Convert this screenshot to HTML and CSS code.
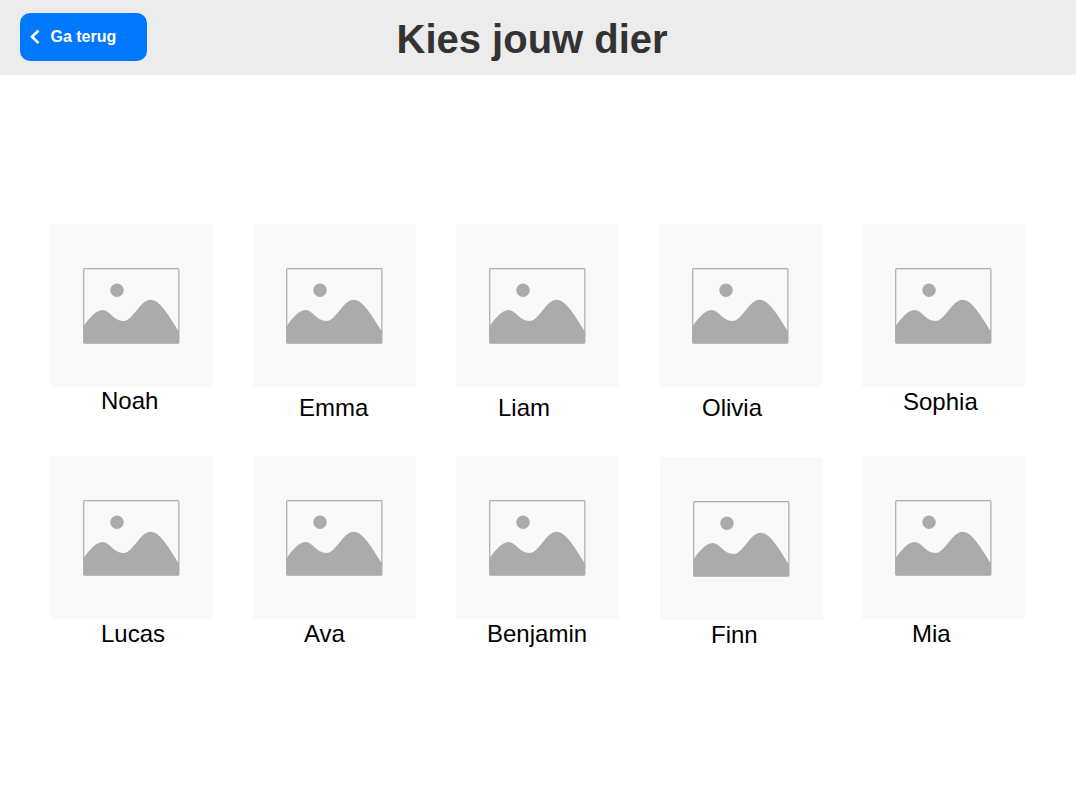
FILE: index.html
```html
<!DOCTYPE html>
<html lang="nl">
<head>
<meta charset="utf-8">
<title>Kies jouw dier</title>
<link rel="stylesheet" href="styles.css">
</head>
<body>
<svg class="defs" aria-hidden="true">
  <symbol id="picture" viewBox="0 0 163 163">
    <rect x="33.700" y="44.700" width="95.200" height="74.400" rx="1" fill="none" stroke="#ababab" stroke-width="1.200"/>
    <circle cx="67" cy="66.200" r="6.700" fill="#ababab"/>
    <path fill="#ababab" d="M33.700 102C39 94.500 46 86 52.500 86C60 86 63 97 73.500 97C83 97 90 75.700 100.500 75.700C110 75.700 119 92 128.800 107.200V119.300H33.700Z"/>
  </symbol>
</svg>
<header class="header">
  <button class="back" type="button">
    <svg class="back-icon" viewBox="0 0 10 16" aria-hidden="true"><path d="M8.500 1.500L2 7.800L8.500 14.100" fill="none" stroke="#fff" stroke-width="2.600"/></svg>
    <span>Ga terug</span>
  </button>
  <h1 class="title">Kies jouw dier</h1>
</header>
<main class="animals">
  <div class="card noah"><svg class="tile"><use href="#picture"/></svg><span class="name">Noah</span></div>
  <div class="card emma"><svg class="tile"><use href="#picture"/></svg><span class="name">Emma</span></div>
  <div class="card liam"><svg class="tile"><use href="#picture"/></svg><span class="name">Liam</span></div>
  <div class="card olivia"><svg class="tile"><use href="#picture"/></svg><span class="name">Olivia</span></div>
  <div class="card sophia"><svg class="tile"><use href="#picture"/></svg><span class="name">Sophia</span></div>
  <div class="card lucas"><svg class="tile"><use href="#picture"/></svg><span class="name">Lucas</span></div>
  <div class="card ava"><svg class="tile"><use href="#picture"/></svg><span class="name">Ava</span></div>
  <div class="card benjamin"><svg class="tile"><use href="#picture"/></svg><span class="name">Benjamin</span></div>
  <div class="card finn"><svg class="tile"><use href="#picture"/></svg><span class="name">Finn</span></div>
  <div class="card mia"><svg class="tile"><use href="#picture"/></svg><span class="name">Mia</span></div>
</main>
</body>
</html>
```
FILE: styles.css
```css
* { box-sizing: border-box; }

body {
  margin: 0;
  background: #fff;
  font-family: "Liberation Sans", Arial, sans-serif;
  color: #000;
}

.defs { display: none; }

.header {
  display: grid;
  grid-template-columns: 127px auto;
  justify-content: start;
  align-items: center;
  column-gap: 249.5px;
  height: 75px;
  padding: 0 20px 1px;
  background: #ececec;
}

.back {
  display: flex;
  align-items: center;
  gap: 10.5px;
  width: 127px;
  height: 48px;
  padding: 0 10px;
  border: 0;
  border-radius: 10px;
  background: #0077ff;
  color: #fff;
  font: bold 16px/18px "Liberation Sans", Arial, sans-serif;
}

.back-icon { width: 10px; height: 16px; }

.title {
  margin: 4px 0 0;
  font-size: 40px;
  line-height: 46px;
  color: #333;
  white-space: nowrap;
}

.animals {
  display: grid;
  grid-template-columns: repeat(5, 163px);
  grid-auto-rows: 192px;
  gap: 40px;
  padding: 149px 50px 0;
}

.card { display: flex; flex-direction: column; }

.tile {
  display: block;
  flex: none;
  width: 163px;
  height: 163px;
  background: #f9f9f9;
}

.name {
  font-size: 24px;
  line-height: 28px;
  white-space: nowrap;
}

.noah .name { padding-left: 51px; }
.emma .name { padding: 7px 0 0 46px; }
.liam .name { padding: 7px 0 0 42px; }
.olivia .name { padding: 7px 0 0 43px; }
.sophia .name { padding: 1px 0 0 41px; }
.lucas .name { padding: 1px 0 0 51px; }
.ava .name { padding: 1px 0 0 51px; }
.benjamin .name { padding: 1px 0 0 31px; }
.finn { margin: 1px 0 0 1px; }
.finn .name { padding: 1px 0 0 51px; }
.mia .name { padding: 1px 0 0 50px; }
```
